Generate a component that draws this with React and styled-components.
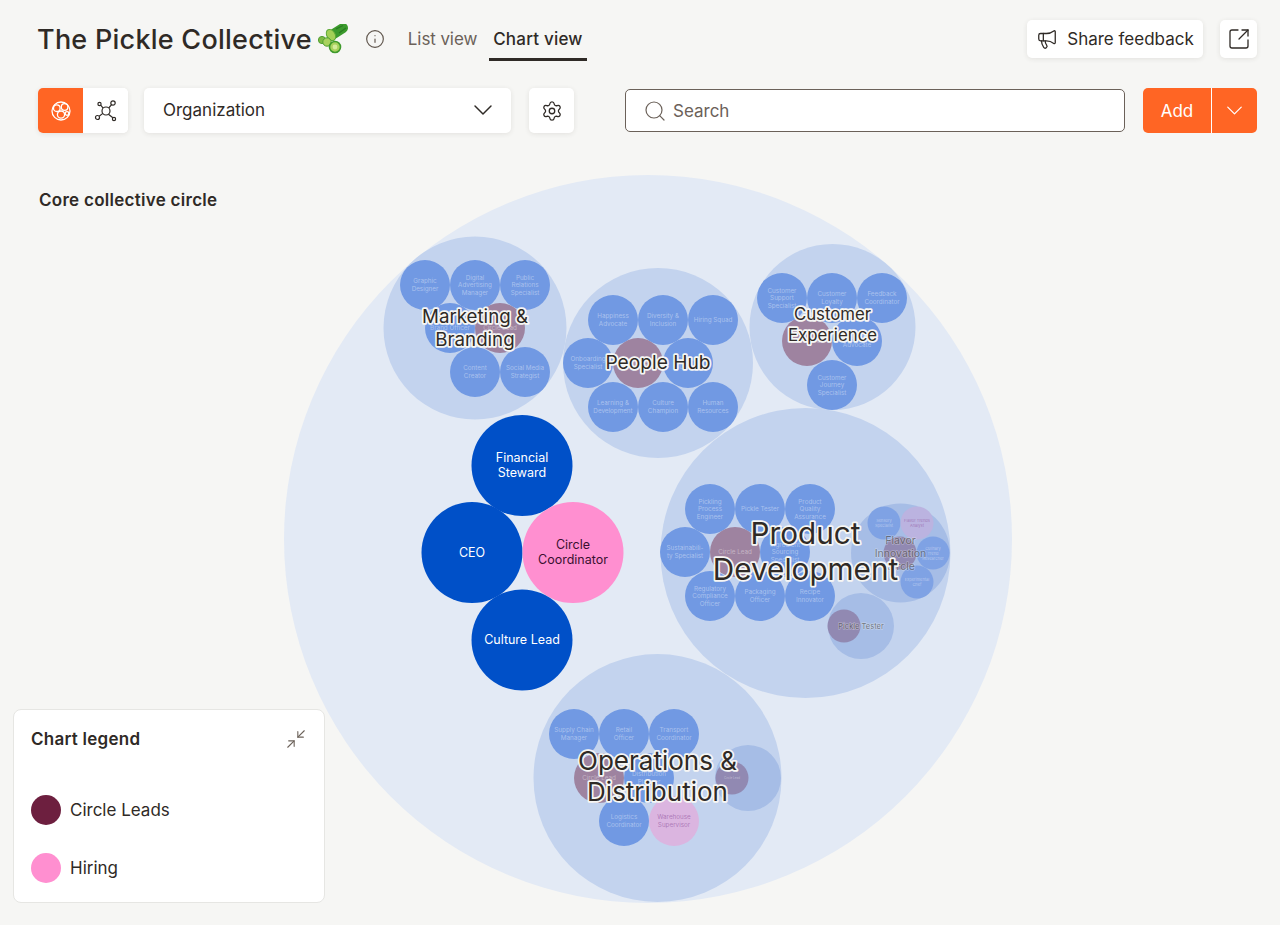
import React from 'react';
import styled, { createGlobalStyle } from 'styled-components';
import { ChevronDown, Info, Megaphone, Minimize2, Search, Settings, SquareArrowOutUpRight } from 'lucide-react';

const GlobalStyle = createGlobalStyle`
  html, body {
    margin: 0;
    padding: 0;
    background: #f6f6f4;
  }
  * {
    box-sizing: border-box;
  }
`;

const Page = styled.div`
  width: 1280px;
  height: 925px;
  overflow: hidden;
  display: flex;
  flex-direction: column;
  font-family: Inter, "Liberation Sans", sans-serif;
  color: #2f2a26;
  background: #f6f6f4;
`;

const TopRow = styled.header`
  display: flex;
  align-items: flex-start;
  height: 88px;
  padding: 20px 23px 0 37px;
`;

const Title = styled.h1`
  display: flex;
  align-items: center;
  height: 38px;
  margin: 0;
  font-size: 27px;
  font-weight: 500;
  letter-spacing: 0.25px;
  white-space: nowrap;
`;

const InfoButton = styled.span`
  display: flex;
  align-items: center;
  height: 38px;
  margin: 0 19px 0 16px;
  color: #5f554c;
`;

const Tabs = styled.nav`
  display: flex;
  height: 41px;
`;

const Tab = styled.span`
  display: flex;
  align-items: center;
  height: 41px;
  padding: 0 4px 1px;
  margin-right: ${(p) => (p.$active ? '0' : '8px')};
  font-size: 17px;
  font-weight: ${(p) => (p.$active ? 500 : 400)};
  letter-spacing: ${(p) => (p.$active ? '0.2px' : '-0.1px')};
  color: ${(p) => (p.$active ? '#2f2a26' : '#6b6159')};
  border-bottom: 3px solid ${(p) => (p.$active ? '#2f2a26' : 'transparent')};
`;

const Spacer = styled.div`
  flex: 1;
`;

const WhiteButton = styled.button`
  display: flex;
  align-items: center;
  justify-content: center;
  gap: 9px;
  height: ${(p) => p.$h || 38}px;
  width: ${(p) => p.$w}px;
  margin-left: ${(p) => p.$ml || 0}px;
  padding: 0;
  border: 0;
  border-radius: 5px;
  background: #fff;
  box-shadow: 0 1px 5px rgba(60, 50, 40, 0.1);
  font-family: inherit;
  font-size: 17px;
  color: #2f2a26;
`;

const ToolRow = styled.div`
  display: flex;
  align-items: center;
  height: 45px;
  padding: 0 23px 0 38px;
`;

const Toggle = styled.div`
  display: flex;
  width: 90px;
  height: 45px;
  border-radius: 5px;
  overflow: hidden;
  background: #fff;
  box-shadow: 0 1px 5px rgba(60, 50, 40, 0.1);
`;

const ToggleItem = styled.span`
  display: flex;
  align-items: center;
  justify-content: center;
  width: 45px;
  background: ${(p) => (p.$active ? '#ff6524' : '#fff')};
  color: ${(p) => (p.$active ? '#fff' : '#2f2a26')};
`;

const Select = styled.div`
  display: flex;
  align-items: center;
  justify-content: space-between;
  width: 367px;
  height: 45px;
  margin: 0 18px 0 16px;
  padding: 0 12px 2px 19px;
  border-radius: 5px;
  background: #fff;
  box-shadow: 0 1px 5px rgba(60, 50, 40, 0.1);
  font-size: 17px;
`;

const SearchBox = styled.div`
  display: flex;
  align-items: center;
  gap: 6px;
  width: 500px;
  height: 43px;
  margin: 0 18px 0 51px;
  padding: 0 17px;
  border: 1px solid #6b6159;
  border-radius: 5px;
  background: #fff;
  font-size: 17px;
  color: #6b6159;
`;

const AddGroup = styled.div`
  display: flex;
  width: 114px;
  height: 45px;
  border-radius: 5px;
  overflow: hidden;
  background: #ff6524;
  color: #fff;
  font-size: 17px;
`;

const AddLabel = styled.span`
  display: flex;
  align-items: center;
  justify-content: center;
  width: 69px;
  border-right: 1px solid #fff;
`;

const AddArrow = styled.span`
  display: flex;
  align-items: center;
  justify-content: center;
  flex: 1;
`;

const Stage = styled.main`
  position: relative;
  flex: 1;
  padding: 57px 0 0 39px;
`;

const ChartSvg = styled.svg`
  position: absolute;
  left: 0;
  top: 0;
  font-family: Inter, "Liberation Sans", sans-serif;
`;

const StageTitle = styled.h2`
  position: relative;
  margin: 0;
  font-size: 17px;
  line-height: 20px;
  font-weight: 600;
  letter-spacing: 0.28px;
`;

const Outer = styled.circle`
  fill: #e3eaf5;
`;

const Group = styled.circle`
  fill: ${(p) => (p.$sub ? '#a6bde6' : '#c3d3ee')};
`;

const nodeFills = {
  role: '#7199e3',
  lead: '#9e83a0',
  hiring: '#dbb5e0',
  subRole: '#7fa2e4',
  subLead: '#9189b2',
  subHiring: '#bbb3e0',
  core: '#0050c8',
  corePink: '#ff8fd0',
};

const Node = styled.circle`
  fill: ${(p) => nodeFills[p.$kind]};
`;

const NodeText = styled.text`
  fill: ${(p) => p.$color || '#ffffff'};
  fill-opacity: ${(p) => p.$opacity || 0.4};
  font-size: ${(p) => p.$size || 6}px;
  text-anchor: middle;
`;

const GroupLabel = styled.text`
  fill: #2f2a26;
  fill-opacity: ${(p) => p.$opacity || 1};
  stroke: #f6f6f4;
  stroke-opacity: ${(p) => p.$haloOpacity || 1};
  stroke-width: ${(p) => p.$halo || 3.5}px;
  stroke-linejoin: round;
  paint-order: stroke;
  font-size: ${(p) => p.$size}px;
  text-anchor: middle;
`;

const Legend = styled.aside`
  position: absolute;
  left: 13px;
  top: 576px;
  width: 312px;
  height: 194px;
  padding: 19px 17px;
  border: 1px solid #e6e6e3;
  border-radius: 8px;
  background: #fff;
`;

const LegendHead = styled.div`
  display: flex;
  align-items: center;
  justify-content: space-between;
  height: 20px;
  margin-bottom: 46px;
  font-size: 17px;
  font-weight: 600;
  color: #6b6159;
`;

const LegendTitle = styled.span`
  color: #2f2a26;
  letter-spacing: 0.25px;
`;

const LegendRow = styled.div`
  display: flex;
  align-items: center;
  gap: 9px;
  height: 30px;
  margin-bottom: 28px;
  font-size: 17px;
`;

const Dot = styled.span`
  width: 30px;
  height: 30px;
  border-radius: 50%;
  background: ${(p) => p.$color};
`;

function Lines({ x, y, lines, gap, as: Comp, ...rest }) {
  const start = y - ((lines.length - 1) * gap) / 2;
  return lines.map((line, i) => (
    <Comp key={i} x={x} y={start + i * gap} dominantBaseline="central" {...rest}>{line}</Comp>
  ));
}

function Role({ x, y, kind = 'role', label = [], r = 25, size = 6.3, gap = 7.5 }) {
  const isHiring = kind === 'hiring' || kind === 'subHiring';
  return (
    <g>
      <Node cx={x} cy={y} r={r} $kind={kind} />
      <Lines x={x} y={y} lines={label} gap={gap} as={NodeText} $size={size}
        $color={isHiring ? '#8e4f9c' : '#ffffff'} $opacity={isHiring ? 0.6 : 0.4} />
    </g>
  );
}

const groups = [
  {
    x: 475, y: 328, r: 91.5, labelY: 327.5, title: ['Marketing &', 'Branding'], size: 18.7, gap: 23,
    nodes: [
      [425, 285, ['Graphic', 'Designer']],
      [475, 285, ['Digital', 'Advertising', 'Manager']],
      [525, 285, ['Public', 'Relations', 'Specialist']],
      [450, 328, ['Brand Officer']],
      [500, 328, ['Circle Lead'], 'lead'],
      [475, 372, ['Content', 'Creator']],
      [525, 372, ['Social Media', 'Strategist']],
    ],
  },
  {
    x: 658, y: 363, r: 95, labelY: 362, title: ['People Hub'], size: 19.2, gap: 23,
    nodes: [
      [613, 320, ['Happiness', 'Advocate']],
      [663, 320, ['Diversity &', 'Inclusion']],
      [713, 320, ['Hiring Squad']],
      [588, 363, ['Onboarding', 'Specialist']],
      [638, 363, ['Circle Lead'], 'lead'],
      [688, 363, ['Culture', 'Guardian']],
      [613, 407, ['Learning &', 'Development']],
      [663, 407, ['Culture', 'Champion']],
      [713, 407, ['Human', 'Resources']],
    ],
  },
  {
    x: 832.5, y: 327, r: 83, labelY: 324.5, title: ['Customer', 'Experience'], size: 16.8, gap: 21,
    nodes: [
      [782, 298, ['Customer', 'Support', 'Specialist']],
      [832, 298, ['Customer', 'Loyalty']],
      [882, 298, ['Feedback', 'Coordinator']],
      [807, 341, ['Circle Lead'], 'lead'],
      [857, 341, ['Support', 'Advocate']],
      [832, 385, ['Customer', 'Journey', 'Specialist']],
    ],
  },
  {
    x: 805.5, y: 553, r: 145, labelY: 551, title: ['Product', 'Development'], size: 29.7, gap: 36,
    nodes: [
      [710, 509, ['Pickling', 'Process', 'Engineer']],
      [760, 509, ['Pickle Tester']],
      [810, 509, ['Product', 'Quality', 'Assurance']],
      [685, 552, ['Sustainabili-', 'ty Specialist']],
      [735, 552, ['Circle Lead'], 'lead'],
      [785, 552, ['Ingredient', 'Sourcing', 'Specialist']],
      [710, 596, ['Regulatory', 'Compliance', 'Officer']],
      [760, 596, ['Packaging', 'Officer']],
      [810, 596, ['Recipe', 'Innovator']],
    ],
    subs: [
      {
        x: 900.5, y: 553, r: 49.5, title: ['Flavor', 'Innovation', 'Circle'], size: 10.5, gap: 13,
        nodes: [
          [884, 523, ['Sensory', 'Specialist'], 'subRole'],
          [917, 523, ['Flavor Trends', 'Analyst'], 'subHiring'],
          [900, 553, [], 'subLead'],
          [933, 553, ['Culinary', 'Trend', 'Researcher'], 'subRole'],
          [917, 582, ['Experimental', 'Chef'], 'subRole'],
        ],
      },
      {
        x: 861, y: 626, r: 33, title: ['Pickle Tester'], size: 7.5, gap: 8,
        nodes: [[844, 626, [], 'subLead']],
      },
    ],
  },
  {
    x: 657.5, y: 778, r: 124, labelY: 776, title: ['Operations &', 'Distribution'], size: 26, gap: 31,
    nodes: [
      [574, 734, ['Supply Chain', 'Manager']],
      [624, 734, ['Retail', 'Officer']],
      [674, 734, ['Transport', 'Coordinator']],
      [599, 778, ['Circle Lead'], 'lead'],
      [649, 778, ['Distribution', 'Planner']],
      [624, 821, ['Logistics', 'Coordinator']],
      [674, 821, ['Warehouse', 'Supervisor'], 'hiring'],
    ],
    subs: [
      {
        x: 748, y: 778, r: 33, title: [], size: 4, gap: 4,
        nodes: [[732, 778, ['Circle Lead'], 'subLead']],
      },
    ],
  },
];

const coreRoles = [
  [522, 465.5, ['Financial', 'Steward'], 'core'],
  [472, 552.5, ['CEO'], 'core'],
  [573, 552.5, ['Circle', 'Coordinator'], 'corePink'],
  [522, 640, ['Culture Lead'], 'core'],
];

function SubGroup({ sub }) {
  return (
    <g>
      <Group cx={sub.x} cy={sub.y} r={sub.r} $sub />
      {sub.nodes.map(([x, y, label, kind]) => (
        <Role key={`${x}-${y}`} x={x} y={y} r={16.5} kind={kind} label={label} size={sub.r > 40 ? 4 : 3} gap={5} />
      ))}
      <Lines x={sub.x} y={sub.y} lines={sub.title} gap={sub.gap} as={GroupLabel}
        $size={sub.size} $opacity={0.55} $halo={1.5} $haloOpacity={0.3} />
    </g>
  );
}

function CircleGroup({ group }) {
  return (
    <g>
      <Group cx={group.x} cy={group.y} r={group.r} />
      {group.nodes.map(([x, y, label, kind]) => (
        <Role key={`${x}-${y}`} x={x} y={y} kind={kind} label={label} />
      ))}
      {(group.subs || []).map((sub) => (
        <SubGroup key={`${sub.x}-${sub.y}`} sub={sub} />
      ))}
      <Lines x={group.x} y={group.labelY} lines={group.title} gap={group.gap} as={GroupLabel} $size={group.size} />
    </g>
  );
}

function PackIcon() {
  return (
    <svg width="20" height="20" viewBox="0 0 20 20" fill="none" stroke="currentColor" strokeWidth="1.3">
      <circle cx="10" cy="10" r="9" />
      <circle cx="5.8" cy="7.2" r="3.3" />
      <circle cx="13.6" cy="6" r="3.3" />
      <circle cx="10" cy="13.6" r="3.6" />
      <circle cx="16" cy="12.5" r="1.8" />
    </svg>
  );
}

function NetworkIcon() {
  return (
    <svg width="24" height="24" viewBox="0 0 24 24" fill="none" stroke="currentColor" strokeWidth="1.2">
      <circle cx="12" cy="12" r="4" />
      <circle cx="19" cy="4" r="2.2" />
      <circle cx="5.5" cy="5" r="1.6" />
      <circle cx="3.5" cy="18.5" r="2" />
      <circle cx="20" cy="20" r="1.6" />
      <path d="M14.7 9 17.6 5.7M9.2 9.2 6.6 6.2M8.8 14.4 5.2 17.2M14.4 15.2 18.9 18.8" />
    </svg>
  );
}

function PickleEmoji() {
  return (
    <svg width="32" height="30" viewBox="0 0 32 30" style={{ marginLeft: 5 }}>
      <path d="M15 11 26 4" stroke="#3b9a2c" strokeWidth="10" strokeLinecap="round" />
      <path d="M19 5 26 1.500M22 9 29 4" stroke="#2a7a22" strokeWidth="1.200" />
      <ellipse cx="14" cy="11" rx="4.200" ry="6" transform="rotate(-30 14 11)" fill="#a3d056" stroke="#5da936" />
      <circle cx="5" cy="16" r="3.600" fill="#7fba45" stroke="#4f9f30" />
      <circle cx="10" cy="18" r="4.200" fill="#a8d25e" stroke="#4f9f30" />
      <circle cx="18" cy="23" r="5.500" fill="#a8d25e" stroke="#3f9a2c" strokeWidth="1.600" />
      <circle cx="18" cy="23" r="2.400" fill="#d5eb9c" />
    </svg>
  );
}

export default function App() {
  return (
    <Page>
      <GlobalStyle />
      <TopRow>
        <Title>The Pickle Collective<PickleEmoji /></Title>
        <InfoButton><Info size={20} strokeWidth={1.4} /></InfoButton>
        <Tabs>
          <Tab>List view</Tab>
          <Tab $active>Chart view</Tab>
        </Tabs>
        <Spacer />
        <WhiteButton $w={176}><Megaphone size={22} strokeWidth={1.4} />Share feedback</WhiteButton>
        <WhiteButton $w={37} $ml={17}><SquareArrowOutUpRight size={24} strokeWidth={1.3} /></WhiteButton>
      </TopRow>
      <ToolRow>
        <Toggle>
          <ToggleItem $active><PackIcon /></ToggleItem>
          <ToggleItem><NetworkIcon /></ToggleItem>
        </Toggle>
        <Select>Organization<ChevronDown size={32} strokeWidth={1.1} /></Select>
        <WhiteButton $w={45} $h={45}><Settings size={22} strokeWidth={1.4} /></WhiteButton>
        <SearchBox><Search size={24} strokeWidth={1.2} />Search</SearchBox>
        <AddGroup>
          <AddLabel>Add</AddLabel>
          <AddArrow><ChevronDown size={27} strokeWidth={1.1} /></AddArrow>
        </AddGroup>
      </ToolRow>
      <Stage>
        <ChartSvg width="1280" height="792" viewBox="0 133 1280 792">
          <Outer cx={648} cy={539} r={364} />
          {groups.map((group) => (
            <CircleGroup key={group.title[0]} group={group} />
          ))}
          {coreRoles.map(([x, y, label, kind]) => (
            <g key={label[0]}>
              <Node cx={x} cy={y} r={50.5} $kind={kind} />
              <Lines x={x} y={y - 0.5} lines={label} gap={15} as={NodeText} $size={12.5} $opacity={1}
                $color={kind === 'corePink' ? '#3a1030' : '#ffffff'} />
            </g>
          ))}
        </ChartSvg>
        <StageTitle>Core collective circle</StageTitle>
        <Legend>
          <LegendHead>
            <LegendTitle>Chart legend</LegendTitle>
            <Minimize2 size={22} strokeWidth={1.2} />
          </LegendHead>
          <LegendRow><Dot $color="#6d1f3f" />Circle Leads</LegendRow>
          <LegendRow><Dot $color="#ff8fd0" />Hiring</LegendRow>
        </Legend>
      </Stage>
    </Page>
  );
}
